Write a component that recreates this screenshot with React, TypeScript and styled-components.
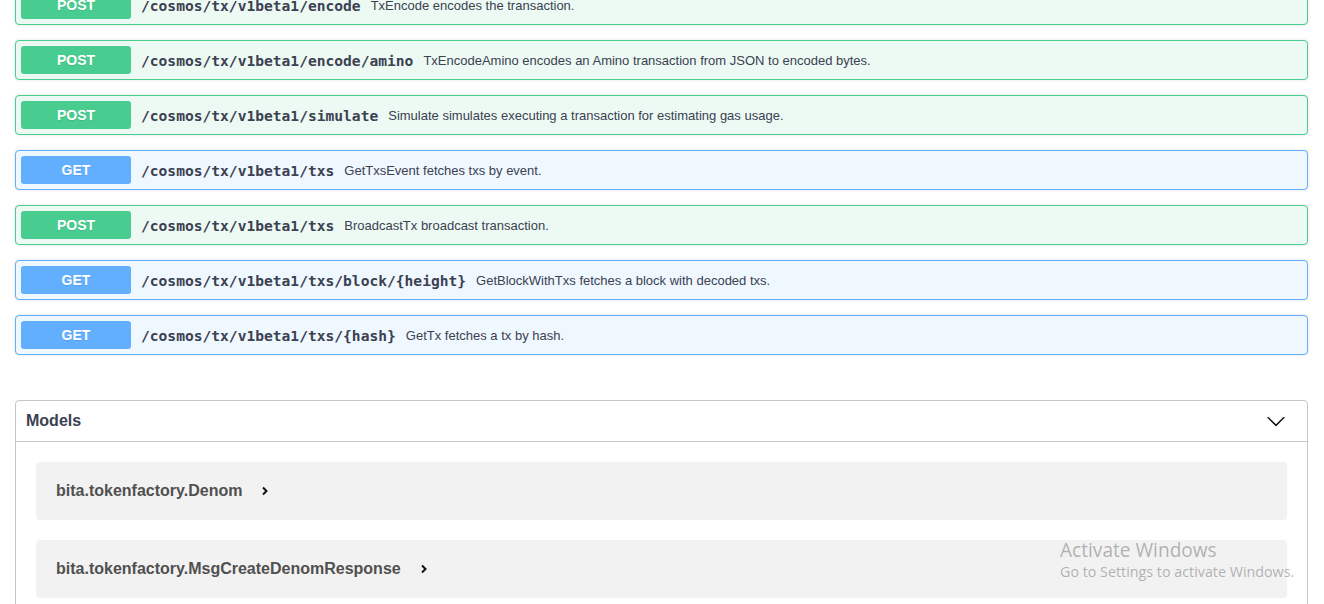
import React from "react";
import styled, { createGlobalStyle } from "styled-components";

const Global = createGlobalStyle`
  html, body { margin: 0; padding: 0; background: #fff; overflow: hidden; }
  body { font-family: "Liberation Sans", Arial, sans-serif; }
`;

type Method = "GET" | "POST";

const palette: Record<Method, { main: string; bg: string }> = {
  GET: { main: "#61affe", bg: "#eff7ff" },
  POST: { main: "#49cc90", bg: "#edfaf4" },
};

const Page = styled.div`
  position: relative;
  width: 1324px;
  height: 604px;
  overflow: hidden;
`;

const Content = styled.div`
  display: flex;
  flex-direction: column;
  padding: 0 16px 0 15px;
  margin-top: -15px;
`;

const OpList = styled.div`
  display: flex;
  flex-direction: column;
  gap: 15px;
`;

const Block = styled.div<{ $m: Method }>`
  display: flex;
  align-items: center;
  padding: 5px;
  border: 1px solid ${(p) => palette[p.$m].main};
  background: ${(p) => palette[p.$m].bg};
  border-radius: 4px;
  box-shadow: 0 0 3px rgba(0, 0, 0, 0.12);
  box-sizing: content-box;
  height: 28px;
`;

const Badge = styled.span<{ $m: Method }>`
  flex: 0 0 110px;
  height: 28px;
  line-height: 28px;
  text-align: center;
  background: ${(p) => palette[p.$m].main};
  color: #fff;
  font-size: 14px;
  font-weight: 700;
  border-radius: 3px;
  text-shadow: 0 1px 0 rgba(0, 0, 0, 0.1);
  font-family: "Liberation Sans", Arial, sans-serif;
`;

const Path = styled.span`
  padding: 0 10px;
  font-family: "DejaVu Sans Mono", "Liberation Mono", monospace;
  font-size: 14.6px;
  font-weight: 700;
  color: #3b4151;
  white-space: nowrap;
`;

const Desc = styled.span`
  font-size: 13px;
  color: #3b4151;
  flex: 1;
`;

const Models = styled.section`
  margin-top: 45px;
  border: 1px solid rgba(59, 65, 81, 0.3);
  border-radius: 4px;
`;

const ModelsHeader = styled.div`
  display: flex;
  align-items: center;
  justify-content: space-between;
  height: 40px;
  padding: 0 21px 0 10px;
  border-bottom: 1px solid rgba(59, 65, 81, 0.3);
`;

const ModelsTitle = styled.h4`
  margin: 0;
  font-size: 16px;
  font-weight: 700;
  color: #3b4151;
`;

const ModelList = styled.div`
  display: flex;
  flex-direction: column;
  gap: 20px;
  padding: 20px;
`;

const ModelContainer = styled.div`
  display: flex;
  align-items: center;
  gap: 19px;
  height: 58px;
  padding: 0 20px;
  background: rgba(0, 0, 0, 0.05);
  border-radius: 4px;
`;

const ModelTitle = styled.span`
  font-size: 16px;
  font-weight: 700;
  color: #505050;
`;

const Watermark = styled.div`
  position: absolute;
  left: 1060px;
  top: 538px;
  font-family: "Open Sans", "Noto Sans", sans-serif;
  color: rgba(120, 120, 120, 0.55);
  pointer-events: none;
`;

const WmTitle = styled.div`
  font-size: 19.1px;
  line-height: 24px;
`;

const WmSub = styled.div`
  font-size: 14.3px;
  line-height: 20px;
`;

const ops: { m: Method; path: string; desc: string }[] = [
  { m: "POST", path: "/cosmos/tx/v1beta1/encode", desc: "TxEncode encodes the transaction." },
  { m: "POST", path: "/cosmos/tx/v1beta1/encode/amino", desc: "TxEncodeAmino encodes an Amino transaction from JSON to encoded bytes." },
  { m: "POST", path: "/cosmos/tx/v1beta1/simulate", desc: "Simulate simulates executing a transaction for estimating gas usage." },
  { m: "GET", path: "/cosmos/tx/v1beta1/txs", desc: "GetTxsEvent fetches txs by event." },
  { m: "POST", path: "/cosmos/tx/v1beta1/txs", desc: "BroadcastTx broadcast transaction." },
  { m: "GET", path: "/cosmos/tx/v1beta1/txs/block/{height}", desc: "GetBlockWithTxs fetches a block with decoded txs." },
  { m: "GET", path: "/cosmos/tx/v1beta1/txs/{hash}", desc: "GetTx fetches a tx by hash." },
];

const ChevronDown = () => (
  <svg width="20" height="20" viewBox="0 0 20 20">
    <path
      d="M17.418 6.109c.272-.268.709-.268.979 0s.271.701 0 .969l-7.908 7.83c-.27.268-.707.268-.979 0l-7.908-7.83c-.27-.268-.27-.701 0-.969.271-.268.709-.268.979 0L10 13.25l7.418-7.141z"
      fill="#111"
    />
  </svg>
);

const ChevronRight = () => (
  <svg width="8" height="10" viewBox="0 0 8 10">
    <path d="M2 1.5 L5.5 5 L2 8.5" fill="none" stroke="#111" strokeWidth="2" />
  </svg>
);

export default function App() {
  return (
    <Page>
      <Global />
      <Content>
        <OpList>
          {ops.map((o, i) => (
            <Block key={i} $m={o.m}>
              <Badge $m={o.m}>{o.m}</Badge>
              <Path>{o.path}</Path>
              <Desc>{o.desc}</Desc>
            </Block>
          ))}
        </OpList>
        <Models>
          <ModelsHeader>
            <ModelsTitle>Models</ModelsTitle>
            <ChevronDown />
          </ModelsHeader>
          <ModelList>
            <ModelContainer>
              <ModelTitle>bita.tokenfactory.Denom</ModelTitle>
              <ChevronRight />
            </ModelContainer>
            <ModelContainer>
              <ModelTitle>bita.tokenfactory.MsgCreateDenomResponse</ModelTitle>
              <ChevronRight />
            </ModelContainer>
          </ModelList>
        </Models>
      </Content>
      <Watermark>
        <WmTitle>Activate Windows</WmTitle>
        <WmSub>Go to Settings to activate Windows.</WmSub>
      </Watermark>
    </Page>
  );
}
